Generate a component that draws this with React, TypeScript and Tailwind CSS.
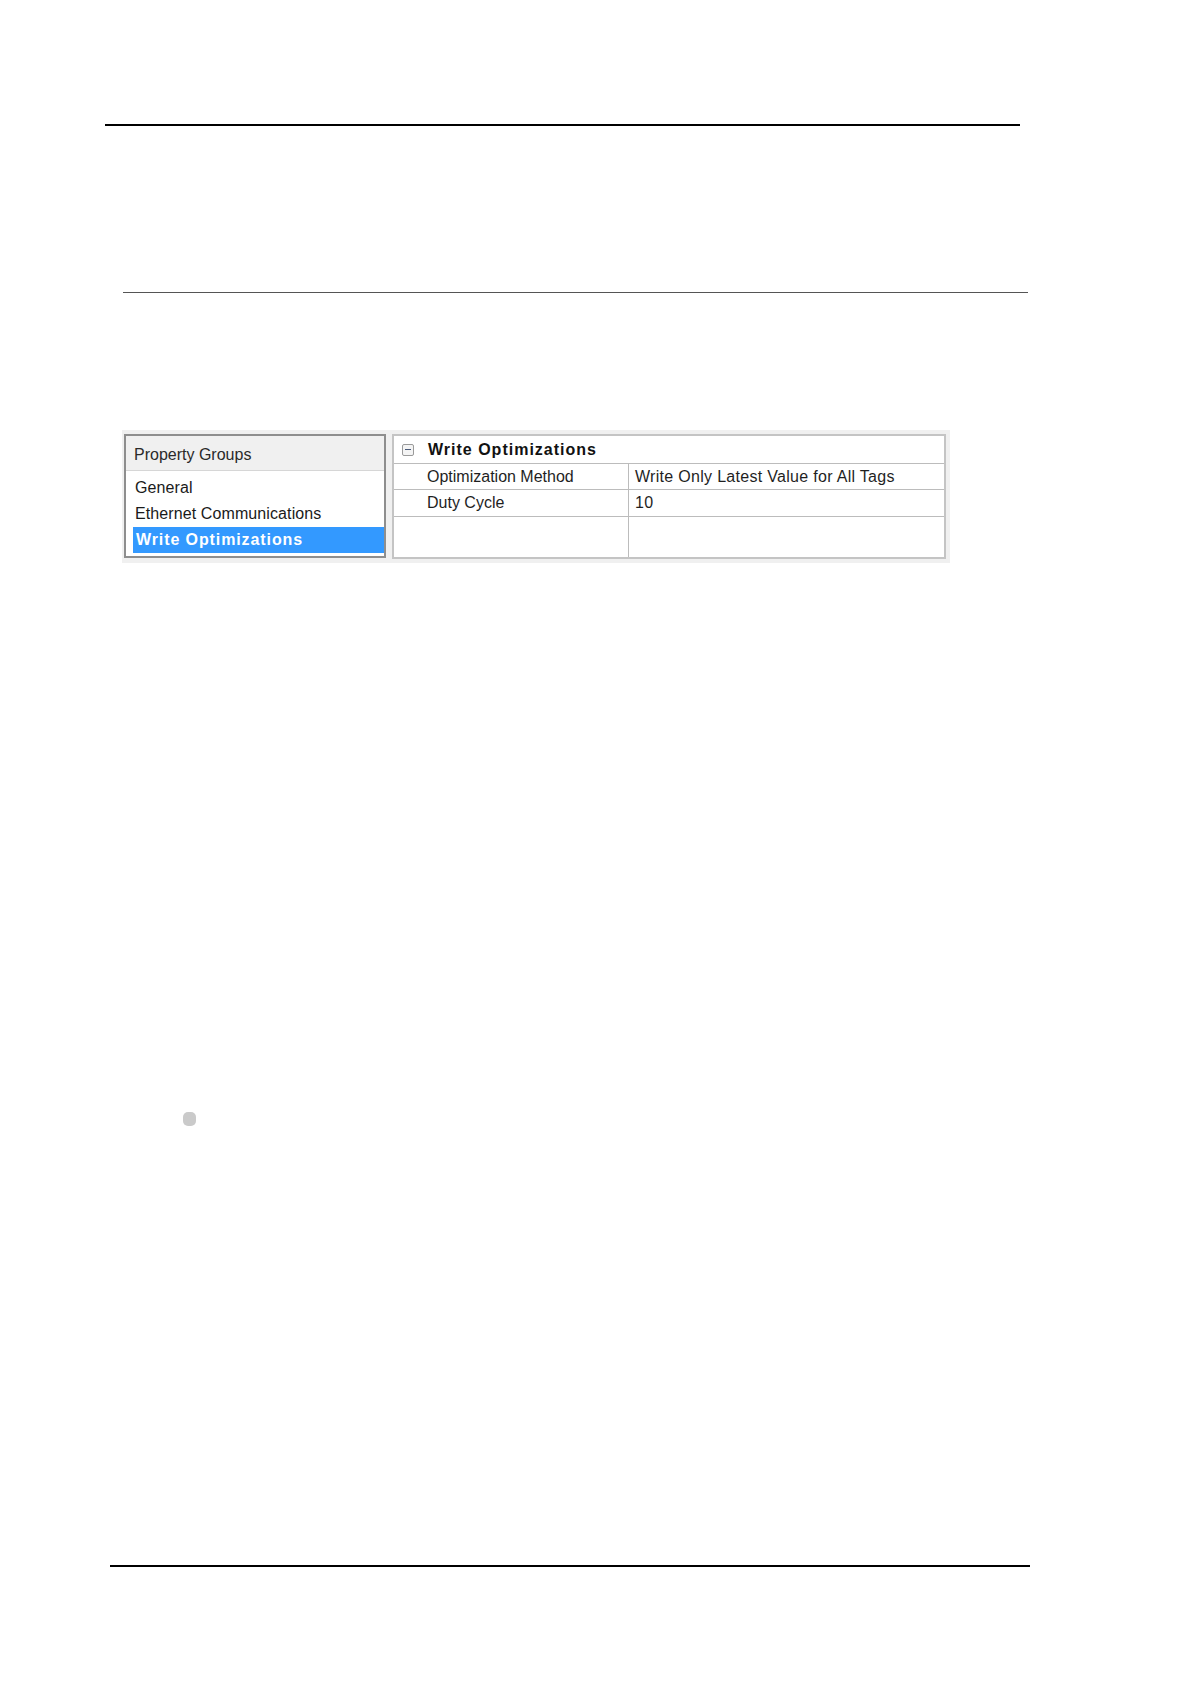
const groups = ["General", "Ethernet Communications", "Write Optimizations"];

const properties = [
  { label: "Optimization Method", value: "Write Only Latest Value for All Tags" },
  { label: "Duty Cycle", value: "10" },
];

function PropertyGroups() {
  return (
    <div className="flex h-[124px] w-[262px] flex-col border-2 border-[#8e8e8e] bg-white">
      <div className="flex h-[35px] items-center border-b border-[#d6d6d6] bg-[#f0f0f0] pt-[3px] pl-[8px] text-[#2a2a2a]">
        Property Groups
      </div>
      <div className="flex flex-col pt-[4px] pl-[7px]">
        {groups.map((g, i) => {
          const active = i === groups.length - 1;
          return (
            <div
              key={g}
              className={
                active
                  ? "flex h-[26px] items-center bg-[#3399ff] pl-[3px] font-bold tracking-[0.9px] text-white"
                  : "flex h-[26px] items-center pl-[2px] tracking-[0.1px] text-[#1a1a1a]"
              }
            >
              {g}
            </div>
          );
        })}
      </div>
    </div>
  );
}

function PropertyGrid() {
  return (
    <div className="flex h-[125px] w-[554px] flex-col border-2 border-[#c4c4c4] bg-white">
      <div className="flex h-[28px] shrink-0 items-center border-b border-[#bcbcbc]">
        <div className="ml-[8px] flex h-[12px] w-[12px] items-center justify-center rounded-[2px] border border-[#9a9a9a] bg-[#f4f4f4]">
          <div className="h-[1px] w-[6px] bg-[#4a5a7a]" />
        </div>
        <span className="ml-[14px] font-bold tracking-[1px] text-[#111]">Write Optimizations</span>
      </div>
      <div className="grid flex-1 grid-cols-[235px_1fr] grid-rows-[26px_27px_1fr]">
        {properties.map((p) => (
          <div key={p.label} className="contents">
            <div className="flex items-center border-r border-b border-[#bcbcbc] pl-[33px] text-[#1f1f1f]">
              {p.label}
            </div>
            <div className="flex items-center border-b border-[#bcbcbc] pl-[6px] tracking-[0.3px] text-[#1f1f1f]">
              {p.value}
            </div>
          </div>
        ))}
        <div className="border-r border-[#bcbcbc]" />
        <div />
      </div>
    </div>
  );
}

export default function App() {
  return (
    <div
      className="h-[1684px] w-[1191px] overflow-hidden bg-white pt-[124px] text-[16px] leading-none"
      style={{ fontFamily: '"Liberation Sans", Arial, sans-serif' }}
    >
      <div className="ml-[105px] h-[2px] w-[915px] bg-black" />
      <div className="mt-[166px] ml-[123px] h-[1px] w-[905px] bg-[#555]" />

      <div className="mt-[137px] ml-[122px] flex h-[133px] w-[828px] gap-[6px] bg-[#f0f0f0] pt-[4px] pl-[2px]">
        <PropertyGroups />
        <PropertyGrid />
      </div>

      <div className="mt-[549px] ml-[183px] h-[14px] w-[13px] rounded-[5px] bg-[#cacaca]" />

      <div className="mt-[439px] ml-[110px] h-[2px] w-[920px] bg-black" />
    </div>
  );
}
